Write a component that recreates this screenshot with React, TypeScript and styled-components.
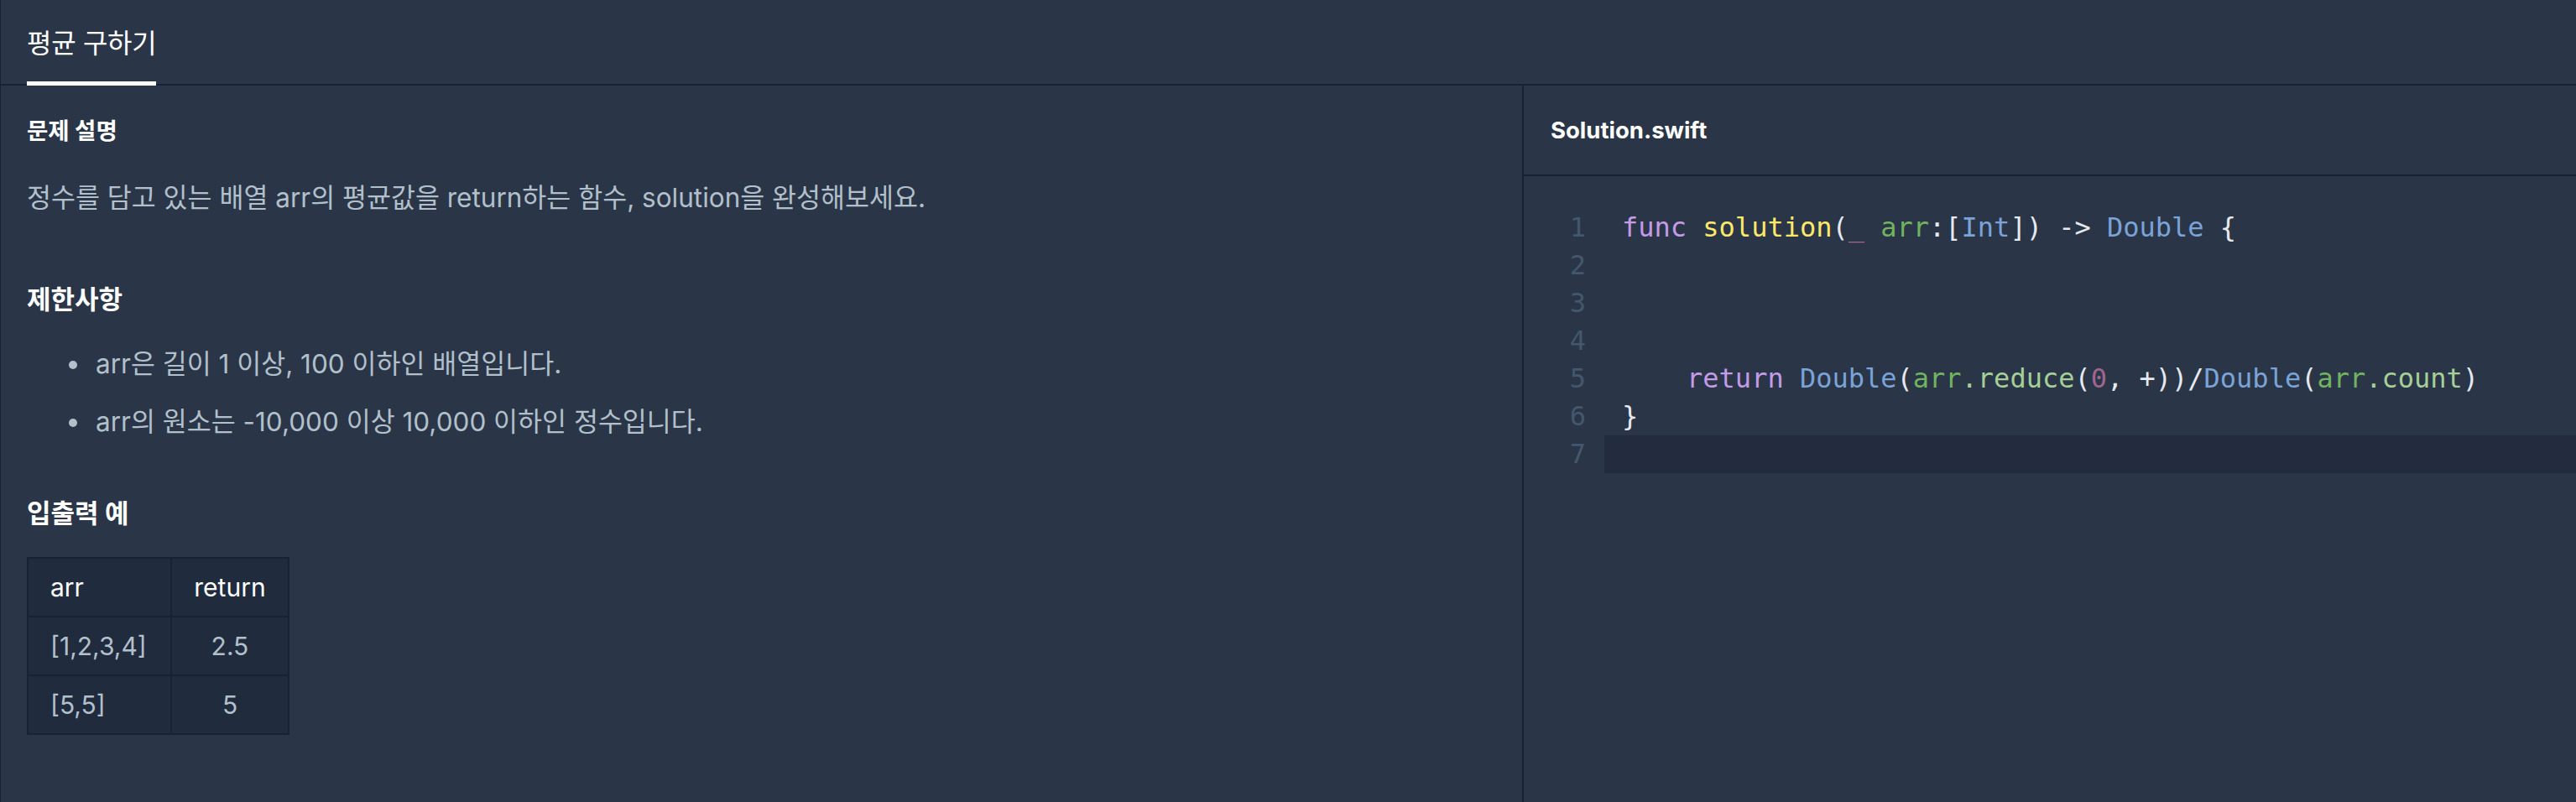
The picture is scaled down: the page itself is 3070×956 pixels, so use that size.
import styled, { createGlobalStyle } from "styled-components";

const BG = "#2a3647";
const LINE = "#172334";

const GlobalStyle = createGlobalStyle`
  html, body {
    margin: 0;
    padding: 0;
    background: ${BG};
  }
  body {
    font-family: "Inter", "Noto Sans CJK KR", sans-serif;
    color: #ffffff;
    -webkit-font-smoothing: antialiased;
  }
  * {
    box-sizing: border-box;
  }
`;

const Page = styled.div`
  min-height: 100vh;
  display: flex;
  flex-direction: column;
  border-left: 1px solid ${LINE};
`;

const TabBar = styled.nav`
  height: 102px;
  display: flex;
  border-bottom: 2px solid ${LINE};
`;

const Tab = styled.div`
  margin-left: 31px;
  margin-bottom: -2px;
  display: flex;
  align-items: center;
  border-bottom: 5px solid #ffffff;
  font-size: 32px;
  color: #ffffff;
  letter-spacing: -0.3px;
`;

const Split = styled.main`
  flex: 1;
  display: grid;
  grid-template-columns: 1813px 1fr;
`;

const Description = styled.section`
  padding: 34px 31px 0;
`;

const SubTitle = styled.h6`
  margin: 0;
  font-size: 27.5px;
  line-height: 40px;
  font-weight: 700;
  color: #ffffff;
`;

const SectionTitle = styled.h5<{ $gap: number }>`
  margin: ${(p) => p.$gap}px 0 0;
  font-size: 31px;
  line-height: 48px;
  font-weight: 700;
  color: #ffffff;
`;

const Paragraph = styled.p`
  margin: 36px 0 0;
  font-size: 31.5px;
  line-height: 48px;
  color: #b2c0cc;
`;

const List = styled.ul`
  margin: 29px 0 0;
  padding: 0 0 0 50px;
  display: flex;
  flex-direction: column;
  gap: 21px;
`;

const Item = styled.li`
  font-size: 31.5px;
  line-height: 48px;
  color: #b2c0cc;
  padding-left: 32px;
  position: relative;
  list-style: none;

  &::before {
    content: "";
    position: absolute;
    left: 0;
    top: 20px;
    width: 10px;
    height: 10px;
    border-radius: 50%;
    background: #b2c0cc;
  }
`;

const Table = styled.table`
  margin-top: 28px;
  border-collapse: collapse;
  background: #202b3d;
  font-size: 30px;
`;

const Cell = styled.td<{ $head?: boolean; $center?: boolean; $w: number }>`
  width: ${(p) => p.$w}px;
  height: 70px;
  padding: 0 26px;
  border: 2px solid ${LINE};
  text-align: ${(p) => (p.$center ? "center" : "left")};
  color: ${(p) => (p.$head ? "#ffffff" : "#b2c0cc")};
  font-weight: 400;
`;

const EditorPane = styled.section`
  border-left: 2px solid ${LINE};
  display: flex;
  flex-direction: column;
`;

const FileHeader = styled.header`
  height: 108px;
  display: flex;
  align-items: center;
  padding: 0 32px;
  border-bottom: 2px solid ${LINE};
  font-size: 27.5px;
  font-weight: 700;
  color: #ffffff;
`;

const Editor = styled.div`
  padding-top: 39px;
  font-family: "DejaVu Sans Mono", "Liberation Mono", monospace;
  font-size: 32px;
`;

const Line = styled.div`
  display: flex;
  height: 45px;
  line-height: 45px;
`;

const Gutter = styled.span`
  width: 96px;
  padding-right: 22px;
  text-align: right;
  color: #44576c;
`;

const Code = styled.span<{ $active?: boolean }>`
  flex: 1;
  padding-left: 21px;
  white-space: pre;
  color: #e6e9ee;
  background: ${(p) => (p.$active ? "#222c3e" : "transparent")};
`;

type Tone = "kw" | "fn" | "param" | "var" | "prop" | "type" | "num" | "plain";

const toneColor: Record<Tone, string> = {
  kw: "#c39be6",
  fn: "#fde86a",
  param: "#a0668f",
  var: "#72b35f",
  prop: "#a6cf98",
  type: "#7ba3d8",
  num: "#a0668f",
  plain: "#e6e9ee",
};

const Tok = styled.span<{ $tone: Tone }>`
  color: ${(p) => toneColor[p.$tone]};
`;

type Seg = [Tone, string];

const code: Seg[][] = [
  [
    ["kw", "func"],
    ["plain", " "],
    ["fn", "solution"],
    ["plain", "("],
    ["param", "_"],
    ["plain", " "],
    ["var", "arr"],
    ["plain", ":["],
    ["type", "Int"],
    ["plain", "]) -> "],
    ["type", "Double"],
    ["plain", " {"],
  ],
  [],
  [],
  [],
  [
    ["plain", "    "],
    ["kw", "return"],
    ["plain", " "],
    ["type", "Double"],
    ["plain", "("],
    ["var", "arr"],
    ["prop", ".reduce"],
    ["plain", "("],
    ["num", "0"],
    ["plain", ", +))/"],
    ["type", "Double"],
    ["plain", "("],
    ["var", "arr"],
    ["prop", ".count"],
    ["plain", ")"],
  ],
  [["plain", "}"]],
  [],
];

const rows = [
  ["[1,2,3,4]", "2.5"],
  ["[5,5]", "5"],
];

export default function App() {
  return (
    <>
      <GlobalStyle />
      <Page>
        <TabBar>
          <Tab>평균 구하기</Tab>
        </TabBar>
        <Split>
          <Description>
            <SubTitle>문제 설명</SubTitle>
            <Paragraph>
              정수를 담고 있는 배열 arr의 평균값을 return하는 함수, solution을 완성해보세요.
            </Paragraph>
            <SectionTitle $gap={73}>제한사항</SectionTitle>
            <List>
              <Item>arr은 길이 1 이상, 100 이하인 배열입니다.</Item>
              <Item>arr의 원소는 -10,000 이상 10,000 이하인 정수입니다.</Item>
            </List>
            <SectionTitle $gap={61}>입출력 예</SectionTitle>
            <Table>
              <thead>
                <tr>
                  <Cell as="th" $head $w={171}>
                    arr
                  </Cell>
                  <Cell as="th" $head $center $w={140}>
                    return
                  </Cell>
                </tr>
              </thead>
              <tbody>
                {rows.map(([a, r]) => (
                  <tr key={a}>
                    <Cell $w={171}>{a}</Cell>
                    <Cell $center $w={140}>
                      {r}
                    </Cell>
                  </tr>
                ))}
              </tbody>
            </Table>
          </Description>
          <EditorPane>
            <FileHeader>Solution.swift</FileHeader>
            <Editor>
              {code.map((segs, i) => (
                <Line key={i}>
                  <Gutter>{i + 1}</Gutter>
                  <Code $active={i === code.length - 1}>
                    {segs.map(([tone, text], j) => (
                      <Tok key={j} $tone={tone}>
                        {text}
                      </Tok>
                    ))}
                  </Code>
                </Line>
              ))}
            </Editor>
          </EditorPane>
        </Split>
      </Page>
    </>
  );
}
